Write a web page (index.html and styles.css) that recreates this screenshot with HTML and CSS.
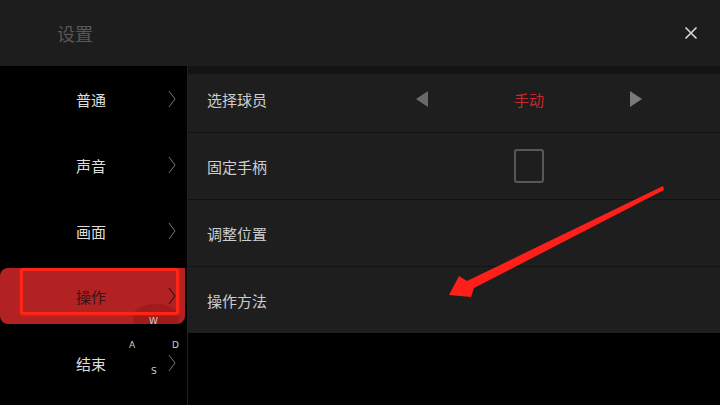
FILE: index.html
```html
<!DOCTYPE html>
<html lang="zh">
<head>
<meta charset="utf-8">
<link rel="stylesheet" href="styles.css">
</head>
<body>
<div class="screen">
  <header class="header">
    <div class="title">设置</div>
    <svg class="close" width="14" height="14" viewBox="0 0 14 14"><path d="M1.5 1.5 L12.5 12.5 M12.5 1.5 L1.5 12.5" stroke="#d8d8d8" stroke-width="1.6" fill="none"/></svg>
  </header>
  <div class="main">
    <nav class="sidebar">
      <div class="item"><span class="label">普通</span><svg class="chev" width="8" height="18" viewBox="0 0 8 18"><path d="M1 1 L7 9 L1 17" stroke="#777" stroke-width="1" fill="none"/></svg></div>
      <div class="item"><span class="label">声音</span><svg class="chev" width="8" height="18" viewBox="0 0 8 18"><path d="M1 1 L7 9 L1 17" stroke="#777" stroke-width="1" fill="none"/></svg></div>
      <div class="item"><span class="label">画面</span><svg class="chev" width="8" height="18" viewBox="0 0 8 18"><path d="M1 1 L7 9 L1 17" stroke="#777" stroke-width="1" fill="none"/></svg></div>
      <div class="item active">
        <div class="active-bg">
          <div class="bump"></div>
          <span class="label">操作</span><svg class="chev" width="8" height="18" viewBox="0 0 8 18"><path d="M1 1 L7 9 L1 17" stroke="#3a1414" stroke-width="1.2" fill="none"/></svg>
          <div class="outline"></div>
        </div>
      </div>
      <div class="item"><span class="label">结束</span><svg class="chev" width="8" height="18" viewBox="0 0 8 18"><path d="M1 1 L7 9 L1 17" stroke="#777" stroke-width="1" fill="none"/></svg></div>
      <span class="key key-w">W</span>
      <span class="key key-a">A</span>
      <span class="key key-d">D</span>
      <span class="key key-s">S</span>
    </nav>
    <section class="content">
      <div class="rows">
        <div class="row first">
          <span class="row-label">选择球员</span>
          <div class="control">
            <svg width="12" height="16" viewBox="0 0 12 16"><path d="M12 0 L0 8 L12 16 Z" fill="#6a6a6a"/></svg>
            <span class="value">手动</span>
            <svg width="12" height="16" viewBox="0 0 12 16"><path d="M0 0 L12 8 L0 16 Z" fill="#7a7a7a"/></svg>
          </div>
        </div>
        <div class="row">
          <span class="row-label">固定手柄</span>
          <div class="control center"><div class="checkbox"></div></div>
        </div>
        <div class="row"><span class="row-label">调整位置</span></div>
        <div class="row"><span class="row-label">操作方法</span></div>
      </div>
    </section>
  </div>
  <svg class="arrow" width="720" height="405" viewBox="0 0 720 405">
    <polygon points="663,186 664,190 474,288 471,297 449,295 459,276 467,281" fill="#ff1f1a"/>
  </svg>
</div>
</body>
</html>
```
FILE: styles.css
```css
* { box-sizing: border-box; }
html, body { margin: 0; padding: 0; background: #000; }
body { font-family: "Noto Sans CJK SC", "Noto Sans", sans-serif; }
.screen { width: 720px; height: 405px; position: relative; overflow: hidden; background: #000; }
.header {
  height: 66px;
  background: #1d1d1d;
  display: flex;
  align-items: center;
  justify-content: space-between;
  padding: 0 22px 0 57px;
}
.title { color: #575757; font-size: 18px; line-height: 1; }
.close { display: block; }
.main { display: flex; height: 339px; }
.sidebar {
  width: 188px;
  border-right: 1px solid #3a1515;
  background: #000;
  position: relative;
}
.item {
  height: 66px;
  display: flex;
  align-items: center;
  position: relative;
}
.item .label { color: #dedede; font-size: 15px; margin-left: 76px; width: 92px; }
.item .chev { display: block; }
.item.active { align-items: stretch; padding: 4px 2px 6px 0; }
.active-bg {
  flex: 1;
  background: #b22222;
  border-radius: 8px 0 8px 8px;
  display: flex;
  align-items: center;
  position: relative;
  overflow: hidden;
}
.active-bg .label { color: #3a1414; position: relative; }
.active-bg .chev { position: relative; }
.bump {
  position: absolute;
  left: 133px; top: 36px;
  width: 46px; height: 24px;
  border-radius: 50% 50% 0 0;
  background: #9e1c1c;
}
.outline {
  position: absolute;
  left: 20px; top: 0;
  width: 159px; height: 47px;
  border: 3px solid #ff2516;
  border-radius: 3px;
  box-shadow: 0 0 3px rgba(255, 40, 20, 0.6);
}
.key { position: absolute; color: #cfcfcf; font-family: "DejaVu Sans", sans-serif; font-size: 9px; line-height: 1; }
.key-w { left: 149px; top: 251px; }
.key-a { left: 129px; top: 275px; }
.key-d { left: 172px; top: 275px; }
.key-s { left: 151px; top: 301px; }
.content { flex: 1; background: #000; }
.rows { background: #1e1e1e; }
.row {
  height: 67px;
  display: grid;
  grid-template-columns: 200px 244px;
  align-items: center;
  padding-left: 19px;
  border-bottom: 1px solid #121212;
}
.row.first {
  background: linear-gradient(#131313 0, #131313 7px, #1e1e1e 9px);
}
.row:last-child { border-bottom: none; height: 66px; }
.row-label { color: #cdcdcd; font-size: 15px; }
.control {
  display: flex;
  align-items: center;
  justify-content: space-between;
  padding: 0 9px;
}
.control.center { justify-content: center; }
.value { color: #c42a2f; font-size: 15px; }
.checkbox {
  width: 30px; height: 34px;
  border: 2px solid #585858;
  border-radius: 3px;
}
.arrow { position: absolute; left: 0; top: 0; pointer-events: none; }
```
